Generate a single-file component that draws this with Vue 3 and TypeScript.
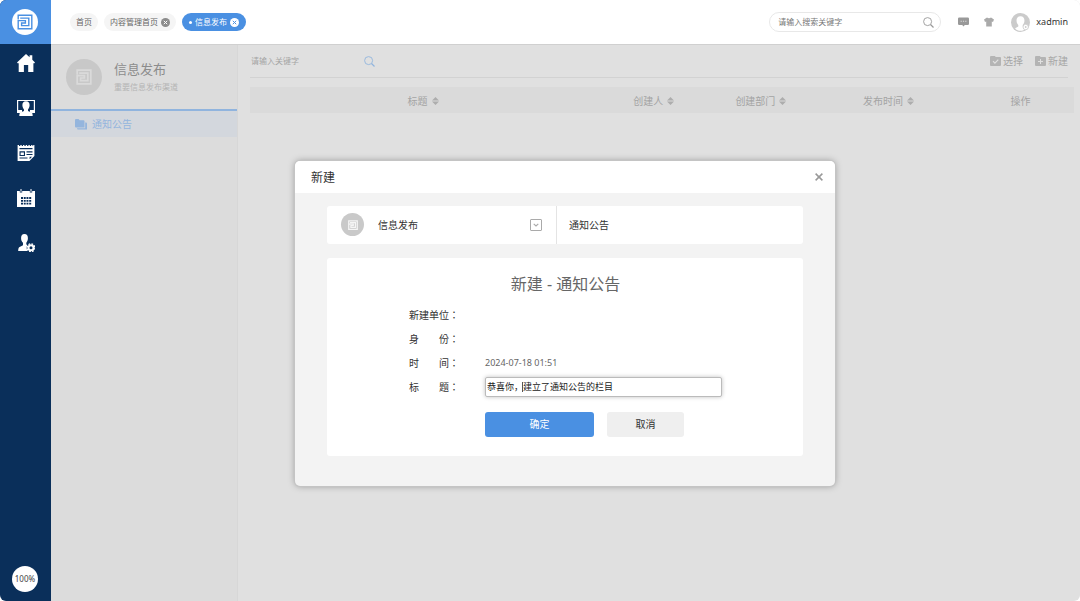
<script setup lang="ts">
import { ref } from 'vue'

interface Tab {
  label: string
  closable: boolean
  active: boolean
}
interface Column {
  label: string
  sortable: boolean
  cls: string
}

const tabs: Tab[] = [
  { label: '首页', closable: false, active: false },
  { label: '内容管理首页', closable: true, active: false },
  { label: '信息发布', closable: true, active: true },
]

const columns: Column[] = [
  { label: '标题', sortable: true, cls: 'col-title' },
  { label: '创建人', sortable: true, cls: 'col-author' },
  { label: '创建部门', sortable: true, cls: 'col-dept' },
  { label: '发布时间', sortable: true, cls: 'col-time' },
  { label: '操作', sortable: false, cls: 'col-ops' },
]

const globalQuery = ref('')
const listQuery = ref('')
const channel = ref('信息发布')
const title = ref('恭喜你，建立了通知公告的栏目')
</script>

<template>
  <div class="app">
    <aside class="rail">
      <a class="brand" href="#" aria-label="首页">
        <span class="brand-disc">
          <svg width="16" height="16" viewBox="0 0 16 16" fill="none" stroke="currentColor" stroke-width="1.4">
            <path d="M1.2 5.4V1.2H14.8V14.8H1.2V6.6H8.4V9H4.6V11.6H11.8V4.1H3.2" />
          </svg>
        </span>
      </a>
      <nav class="rail-nav">
        <a href="#" aria-label="主页">
          <svg width="18" height="18" viewBox="0 0 18 18" fill="currentColor">
            <path d="M9 0L12.6 3.3V1.3H15.3V5.7L18 8.4L17 9.4L16.4 9V18H11.2V11H6.9V18H1.7V9L1 9.4L0 8.4Z" />
          </svg>
        </a>
        <a href="#" aria-label="门户">
          <svg width="18" height="18" viewBox="0 0 18 18" fill="currentColor">
            <path d="M0 1H18V14H14.5L13 13V11H16.8V2.1H1.2V11H5V13L3.5 14H0Z" />
            <path d="M9 2.3C11.6 2.3 12.8 4.1 12.6 6.6C12.5 8.6 11.7 9.6 11 10.4V12L14.7 13.6C15.5 14 15.7 15.8 15.7 17H2.3C2.3 15.8 2.5 14 3.3 13.6L7 12V10.4C6.3 9.6 5.5 8.6 5.4 6.6C5.2 4.1 6.4 2.3 9 2.3Z" />
          </svg>
        </a>
        <a href="#" aria-label="新闻">
          <svg width="18" height="18" viewBox="0 0 18 18" fill="currentColor" fill-rule="evenodd">
            <path d="M.6 1H2V2H3.3V1H4.7V2H6V1H7.4V2H8.7V1H10.1V2H11.4V1H12.8V2H14.1V1H15.5V2H16.2V1H17.4V12L12.4 17H.6ZM2.5 4V5.2H15.5V4ZM2.5 7.3V12H8V7.3ZM9.5 7.3V8.4H15.5V7.3ZM9.5 10V11.1H15.5V10ZM2.5 13.6V14.6H10.5V13.6ZM12.6 12.8V15.2L15 12.8Z" />
            <path d="M3.6 8.4H6.9V10.9H3.6Z" />
          </svg>
        </a>
        <a href="#" aria-label="日程">
          <svg width="18" height="18" viewBox="0 0 18 18" fill="currentColor" fill-rule="evenodd">
            <path d="M0 2H2.8V3.5H5.2V2H12.8V3.5H15.2V2H18V5.2H0ZM3.5 0H4.5V2.8H3.5ZM13.5 0H14.5V2.8H13.5Z" />
            <path d="M0 5H18V18H0ZM4 8V10H6V8ZM6.8 8V10H8.7V8ZM9.5 8V10H11.4V8ZM12.2 8V10H14.2V8ZM4 10.9V12.8H6V10.9ZM6.8 10.9V12.8H8.7V10.9ZM9.5 10.9V12.8H11.4V10.9ZM12.2 10.9V12.8H14.2V10.9ZM4 13.7V15.6H6V13.7ZM6.8 13.7V15.6H8.7V13.7ZM9.5 13.7V15.6H11.4V13.7ZM12.2 13.7V15.6H14.2V13.7Z" />
          </svg>
        </a>
        <a href="#" aria-label="用户设置">
          <svg width="18" height="18" viewBox="0 0 18 18" fill="currentColor">
            <path d="M7.4 0C10 0 11.1 1.9 10.9 4.6C10.8 6.6 10 8 9.3 8.8V10.6L10.4 11C9.3 12.5 9.4 15 10.6 17H1.2C1.2 15 1.5 13.4 2.6 12.9L6 11.2V8.8C4.9 8 4.2 6.6 4.1 4.6C3.9 1.9 5 0 7.4 0Z" />
            <circle cx="14" cy="13.8" r="2.5" fill="none" stroke="currentColor" stroke-width="2" />
            <circle cx="14" cy="13.8" r="3.9" fill="none" stroke="currentColor" stroke-width="1.3" stroke-dasharray="1.8 1.26" />
          </svg>
        </a>
      </nav>
      <button class="zoom-level" type="button">100%</button>
    </aside>

    <div class="workspace">
      <header class="topbar">
        <nav class="tabs">
          <a v-for="tab in tabs" :key="tab.label" href="#" class="tab" :class="{ active: tab.active }">
            <span v-if="tab.active" class="tab-dot"></span>
            <span>{{ tab.label }}</span>
            <svg v-if="tab.closable" class="tab-close" width="9" height="9" viewBox="0 0 9 9">
              <circle class="disc" cx="4.5" cy="4.5" r="4.5" />
              <path class="cross" d="M2.8 2.8L6.2 6.2M6.2 2.8L2.8 6.2" />
            </svg>
          </a>
        </nav>
        <label class="global-search">
          <input v-model="globalQuery" type="text" placeholder="请输入搜索关键字" aria-label="请输入搜索关键字" />
          <svg width="11" height="11" viewBox="0 0 11 11" fill="none" stroke="currentColor">
            <circle cx="4.6" cy="4.6" r="4" stroke-width=".9" />
            <path d="M7.5 7.5L10.5 10.5" stroke-width="1.2" />
          </svg>
        </label>
        <button class="icon-btn message" type="button" aria-label="消息">
          <svg width="11" height="10" viewBox="0 0 11 10">
            <path fill="currentColor" d="M1.2 .5H9.8Q11 .5 11 1.7V6.8Q11 8 9.8 8H6.8L5.5 9.5L4.2 8H1.2Q0 8 0 6.8V1.7Q0 .5 1.2 .5Z" />
            <path stroke="#ddd" stroke-width="1.1" d="M2.6 4.3H3.8M4.9 4.3H6.1M7.2 4.3H8.4" />
          </svg>
        </button>
        <button class="icon-btn skin" type="button" aria-label="皮肤">
          <svg width="10" height="10" viewBox="0 0 10 10" fill="currentColor">
            <path d="M3 .5Q5 2 7 .5L10 2.6L9 5L7.8 4.6V9.5H2.2V4.6L1 5L0 2.6Z" />
          </svg>
        </button>
        <a class="account" href="#">
          <svg width="19" height="19" viewBox="0 0 19 19">
            <circle cx="9.5" cy="9.5" r="9.5" fill="#cbcbcb" />
            <path fill="#fff" d="M9.5 3.3C12.5 3.3 13.7 5.4 13.4 8.2C13.2 10.2 12.5 11 11.7 12V13.6L15 15.2C13.4 17.2 11.5 17.8 9.5 17.8S5.6 17.2 4 15.2L7.3 13.6V12C6.5 11 5.8 10.2 5.6 8.2C5.3 5.4 6.5 3.3 9.5 3.3Z" />
            <circle cx="14.7" cy="14" r="2.7" fill="#fff" stroke="#cbcbcb" stroke-width=".8" />
            <circle cx="14.7" cy="14" r=".9" fill="#cbcbcb" />
          </svg>
          <span>xadmin</span>
        </a>
      </header>

      <div class="content">
        <aside class="panel">
          <div class="panel-head">
            <span class="panel-disc">
              <svg width="16" height="16" viewBox="0 0 16 16" fill="none" stroke="currentColor" stroke-width="1.7">
                <path d="M1.2 5.4V1.2H14.8V14.8H1.2V6.6H8.4V9H4.6V11.6H11.8V4.1H3.2" />
              </svg>
            </span>
            <div>
              <h1>信息发布</h1>
              <p>重要信息发布渠道</p>
            </div>
          </div>
          <a class="panel-item" href="#">
            <svg width="12" height="11" viewBox="0 0 12 11" fill="currentColor">
              <path d="M0 1Q0 0 1 0H3.6L4.6 1.2H8.5Q9.5 1.2 9.5 2.2V8.5H1Q0 8.5 0 7.5Z" />
              <path d="M10.2 3.4H11Q12 3.4 12 4.4V10.5H3Q2 10.5 2 9.3H10.2Z" />
            </svg>
            <span>通知公告</span>
          </a>
        </aside>

        <main class="list">
          <div class="toolbar">
            <label class="list-search">
              <input v-model="listQuery" type="text" placeholder="请输入关键字" aria-label="请输入关键字" />
              <svg width="11" height="11" viewBox="0 0 11 11" fill="none" stroke="currentColor">
                <circle cx="4.6" cy="4.6" r="4" stroke-width=".9" />
                <path d="M7.5 7.5L10.5 10.5" stroke-width="1.3" />
              </svg>
            </label>
            <div class="actions">
              <button type="button">
                <svg width="11" height="10" viewBox="0 0 11 10">
                  <path fill="currentColor" d="M0 1Q0 0 1 0H4.8L5.8 1H10Q11 1 11 2V9Q11 10 10 10H1Q0 10 0 9Z" />
                  <path fill="none" stroke="#e0e0e0" stroke-width="1.2" d="M3 5.2L4.9 7.1L8.3 3.7" />
                </svg>
                <span>选择</span>
              </button>
              <button type="button">
                <svg width="11" height="10" viewBox="0 0 11 10">
                  <path fill="currentColor" d="M0 1Q0 0 1 0H4.8L5.8 1H10Q11 1 11 2V9Q11 10 10 10H1Q0 10 0 9Z" />
                  <path fill="none" stroke="#e0e0e0" stroke-width="1" d="M5.5 3V8M3 5.5H8" />
                </svg>
                <span>新建</span>
              </button>
            </div>
          </div>
          <table class="grid">
            <thead>
              <tr>
                <th v-for="col in columns" :key="col.label" :class="col.cls" scope="col">
                  <span>{{ col.label }}</span>
                  <svg v-if="col.sortable" class="sort" width="7" height="8" viewBox="0 0 7 8" fill="currentColor">
                    <path d="M3.5 0L7 3.4H0ZM3.5 8L0 4.6H7Z" />
                  </svg>
                </th>
              </tr>
            </thead>
          </table>
        </main>

        <div class="overlay">
          <section class="dialog" role="dialog" aria-labelledby="dialog-title">
            <header class="dialog-head">
              <h2 id="dialog-title">新建</h2>
              <button type="button" aria-label="关闭">
                <svg width="8" height="8" viewBox="0 0 8 8" fill="none" stroke="currentColor" stroke-width="1.5">
                  <path d="M.6 .6L7.4 7.4M7.4 .6L.6 7.4" />
                </svg>
              </button>
            </header>
            <div class="dialog-body">
              <div class="picker">
                <label class="picker-channel">
                  <span class="picker-disc">
                    <svg width="10" height="10" viewBox="0 0 16 16" fill="none" stroke="currentColor" stroke-width="2">
                      <path d="M1.2 5.4V1.2H14.8V14.8H1.2V6.6H8.4V9H4.6V11.6H11.8V4.1H3.2" />
                    </svg>
                  </span>
                  <select v-model="channel" aria-label="栏目">
                    <option>信息发布</option>
                  </select>
                  <svg class="picker-arrow" width="12" height="12" viewBox="0 0 12 12" fill="none" stroke="currentColor">
                    <rect x=".5" y=".5" width="11" height="11" rx=".5" />
                    <path d="M3.7 4.9L6 7L8.3 4.9" stroke-width="1.2" />
                  </svg>
                </label>
                <div class="picker-board">通知公告</div>
              </div>

              <form class="card" @submit.prevent>
                <h3>新建 - 通知公告</h3>
                <div class="fields">
                  <span class="name">新建单位：</span>
                  <span></span>
                  <span class="name">身　　份：</span>
                  <span></span>
                  <span class="name">时　　间：</span>
                  <span class="date">2024-07-18 01:51</span>
                  <label class="name" for="notice-title">标　　题：</label>
                  <div class="title-box">
                    <input id="notice-title" v-model="title" type="text" />
                    <span class="caret"></span>
                  </div>
                </div>
                <div class="buttons">
                  <button class="ok" type="submit">确定</button>
                  <button class="cancel" type="button">取消</button>
                </div>
              </form>
            </div>
          </section>
        </div>
      </div>
    </div>
  </div>
</template>

<style>
body {
  margin: 0;
  background: #fff;
}
</style>

<style scoped>
.app,
.app * {
  box-sizing: border-box;
}
.app {
  display: grid;
  grid-template-columns: 51px minmax(0, 1fr);
  min-height: 100vh;
  border-radius: 6px;
  overflow: hidden;
  font-family: "Noto Sans", "Noto Sans CJK SC", sans-serif;
  font-size: 10px;
  line-height: 16px;
  color: #333;
}
a {
  color: inherit;
  text-decoration: none;
}
svg {
  display: block;
  flex: none;
}
button,
input,
select {
  font: inherit;
  color: inherit;
  border: 0;
  margin: 0;
  padding: 0;
  background: none;
  outline: none;
}
h1,
h2,
h3,
p {
  margin: 0;
  font-weight: 400;
}

.rail {
  display: flex;
  flex-direction: column;
  align-items: center;
  background: #0a2f5a;
  padding-bottom: 9px;
}
.brand {
  width: 100%;
  height: 44px;
  display: grid;
  place-items: center;
  padding-right: 1px;
  background: #4a90e2;
}
.brand-disc {
  width: 26px;
  height: 26px;
  border-radius: 50%;
  display: grid;
  place-items: center;
  background: #fff;
  color: #4a90e2;
}
.rail-nav {
  flex: 1;
  display: flex;
  flex-direction: column;
  gap: 21px;
  padding-top: 7px;
  color: #fff;
}
.rail-nav a {
  height: 24px;
  display: grid;
  place-items: center;
}
.zoom-level {
  width: 26px;
  height: 26px;
  margin-right: 1px;
  border-radius: 50%;
  background: #fff;
  color: #444;
  font-size: 8px;
  text-align: center;
}

.workspace {
  display: flex;
  flex-direction: column;
  background: #e0e0e0;
}
.topbar {
  height: 45px;
  display: flex;
  align-items: center;
  padding: 0 12px 0 19px;
  background: #fff;
  border-bottom: 1px solid #d0d0d0;
}
.tabs {
  display: flex;
  gap: 6px;
  margin-right: auto;
  font-size: 8px;
  color: #666;
}
.tab {
  height: 18px;
  display: flex;
  align-items: center;
  gap: 3px;
  padding: 0 6px;
  border-radius: 9px;
  background: #f5f5f5;
  white-space: nowrap;
}
.tab.active {
  padding: 0 7px;
  background: #4a90e2;
  color: #fff;
}
.tab-dot {
  width: 3px;
  height: 3px;
  border-radius: 50%;
  background: #fff;
}
.disc {
  fill: #8c8c8c;
}
.cross {
  stroke: #fff;
  stroke-width: 1;
}
.active .disc {
  fill: #fff;
}
.active .cross {
  stroke: #4a90e2;
}
.global-search {
  width: 172px;
  height: 20px;
  display: flex;
  align-items: center;
  padding: 0 6px 0 8px;
  border: 1px solid #e8e8e8;
  border-radius: 10px;
  color: #999;
  font-size: 8px;
}
.global-search input {
  flex: 1;
  min-width: 0;
}
.global-search input::placeholder {
  color: #777;
  opacity: 1;
}
.icon-btn {
  color: #999;
}
.message {
  margin-left: 17px;
}
.skin {
  margin-left: 15px;
  color: #aaa;
}
.account {
  display: flex;
  align-items: center;
  gap: 6px;
  margin-left: 17px;
  font-size: 9px;
}

.content {
  flex: 1;
  position: relative;
  display: grid;
  grid-template-columns: 187px minmax(0, 1fr);
}
.panel {
  background: #dcdcdc;
  border-right: 1px solid #d7d7d7;
}
.panel-head {
  height: 64px;
  display: flex;
  align-items: center;
  gap: 12px;
  padding-left: 15px;
}
.panel-disc {
  width: 36px;
  height: 36px;
  border-radius: 50%;
  display: grid;
  place-items: center;
  background: #c8c8c8;
  color: #dadada;
}
.panel-head h1 {
  font-size: 13px;
  line-height: 20px;
  color: #8c8c8c;
}
.panel-head p {
  font-size: 8px;
  color: #b4b4b4;
}
.panel-item {
  height: 28px;
  display: flex;
  align-items: center;
  gap: 5px;
  padding-left: 24px;
  border-top: 2px solid #90b4de;
  background: #d3d7dd;
  color: #94b5dd;
}

.list {
  padding: 0 6px 0 12px;
}
.toolbar {
  height: 33px;
  display: flex;
  align-items: center;
  justify-content: space-between;
  margin-right: 6px;
  border-bottom: 1px solid #d2d2d2;
}
.list-search {
  width: 125px;
  display: flex;
  align-items: center;
  padding-left: 1px;
  color: #92b5de;
  font-size: 8px;
}
.list-search input {
  flex: 1;
  min-width: 0;
}
.list-search input::placeholder {
  color: #a4a4a4;
  opacity: 1;
}
.actions {
  display: flex;
  gap: 12px;
}
.actions button {
  display: flex;
  align-items: center;
  gap: 2px;
  color: #b4b4b4;
}
.actions span {
  color: #a6a6a6;
}
.grid {
  width: 100%;
  margin-top: 9px;
  table-layout: fixed;
  border-collapse: collapse;
  background: #dadada;
  color: #a4a4a4;
}
.grid th {
  height: 26px;
  padding: 1px 0 0;
  font-weight: 400;
  text-align: center;
  white-space: nowrap;
}
.col-title {
  width: 42%;
}
.col-author {
  width: 14%;
}
.col-dept {
  width: 12%;
}
.col-time {
  width: 19%;
}
.col-ops {
  width: 13%;
}
.sort {
  display: inline-block;
  margin-left: 4px;
  color: #adadad;
}

.overlay {
  position: absolute;
  inset: 0;
  display: flex;
  align-items: center;
  justify-content: center;
  padding-right: 1px;
}
.dialog {
  width: 540px;
  max-width: 95%;
  border-radius: 5px;
  overflow: hidden;
  background: #f3f3f3;
  box-shadow: 0 0 0 1px #c4c4c4, 0 0 7px rgba(0, 0, 0, 0.35);
}
.dialog-head {
  height: 32px;
  display: flex;
  align-items: center;
  justify-content: space-between;
  padding: 0 12px 0 16px;
  background: #fff;
}
.dialog-head h2 {
  padding-top: 3px;
  font-size: 12px;
}
.dialog-head button {
  color: #999;
}
.dialog-body {
  padding: 13px 32px 30px;
}
.picker {
  display: grid;
  grid-template-columns: 230px minmax(0, 1fr);
  height: 38px;
  margin-bottom: 14px;
  border-radius: 3px;
  background: #fff;
}
.picker-channel {
  display: flex;
  align-items: center;
  padding: 0 14px;
  border-right: 1px solid #e4e4e4;
}
.picker-disc {
  width: 23px;
  height: 23px;
  margin-right: 14px;
  border-radius: 50%;
  display: grid;
  place-items: center;
  background: #c9c9c9;
  color: #f5f5f5;
}
.picker-channel select {
  flex: 1;
  min-width: 0;
  height: 24px;
  appearance: none;
}
.picker-arrow {
  color: #aaa;
  pointer-events: none;
}
.picker-board {
  display: flex;
  align-items: center;
  padding-left: 12px;
}
.card {
  padding: 14px 81px 19px 82px;
  border-radius: 3px;
  background: #fff;
}
.card h3 {
  font-size: 16px;
  line-height: 24px;
  text-align: center;
  color: #666;
}
.fields {
  display: grid;
  grid-template-columns: 76px minmax(0, 1fr);
  grid-auto-rows: 24px;
  align-items: center;
  margin-top: 7px;
}
.name {
  font-family: "Noto Sans CJK JP", "Noto Sans CJK SC", sans-serif;
  white-space: nowrap;
}
.date {
  font-size: 9px;
  color: #666;
}
.title-box {
  position: relative;
  height: 20px;
}
.title-box input {
  display: block;
  width: 100%;
  height: 20px;
  padding: 0 1px;
  border: 1px solid #bbb;
  border-radius: 2px;
  background: #fff;
  box-shadow: 0 0 4px rgba(0, 0, 0, 0.25);
  font-size: 9px;
  color: #222;
}
.caret {
  position: absolute;
  left: 37px;
  top: 5px;
  width: 1px;
  height: 10px;
  background: #555;
}
.buttons {
  display: flex;
  gap: 13px;
  margin: 13px 0 0 76px;
}
.buttons button {
  height: 25px;
  border-radius: 3px;
}
.ok {
  width: 109px;
  background: #4a90e2;
  color: #fff;
}
.cancel {
  width: 77px;
  background: #efefef;
}
</style>
